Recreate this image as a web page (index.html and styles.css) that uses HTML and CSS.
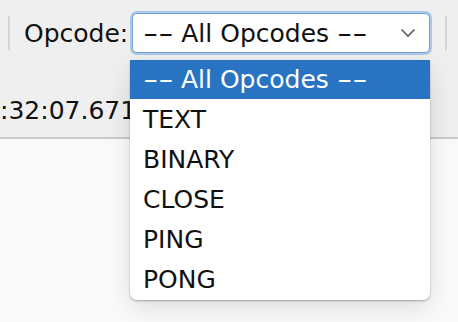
FILE: index.html
```html
<!DOCTYPE html>
<html lang="en">
<head>
  <meta charset="UTF-8">
  <title>Opcode filter</title>
  <link rel="stylesheet" href="styles.css">
</head>
<body>
  <div class="top">
    <div class="toolbar">
      <span class="sep"></span>
      <label class="label" for="opcode">Opcode:</label>
      <div class="select" id="opcode">
        <span class="value"><span class="dash">--</span> All Opcodes <span class="dash">--</span></span>
        <svg class="chevron" width="16" height="10" viewBox="0 0 16 10">
          <path d="M1.5 1.5 L8 8 L14.5 1.5" fill="none" stroke="#5a5a5a" stroke-width="1.6"/>
        </svg>
      </div>
      <span class="sep"></span>
    </div>
    <div class="row">
      <span class="time">:32:07.671</span>
    </div>
  </div>
  <div class="content"></div>

  <ul class="menu">
    <li class="active"><span class="dash">--</span> All Opcodes <span class="dash">--</span></li>
    <li>TEXT</li>
    <li>BINARY</li>
    <li>CLOSE</li>
    <li>PING</li>
    <li>PONG</li>
  </ul>
</body>
</html>
```

FILE: styles.css
```css
body {
  margin: 0;
  background: #fafafa;
  font-family: 'DejaVu Sans', 'Open Sans', Arial, sans-serif;
  font-size: 25px;
  color: #111;
  height: 322px;
  overflow: hidden;
  position: relative;
}

.top {
  background: #efefef;
  height: 137px;
  border-bottom: 2px solid #c8c8c8;
  overflow: hidden;
}

.toolbar {
  display: flex;
  align-items: center;
  height: 66px;
  padding-left: 8px;
}

.sep {
  width: 2px;
  height: 34px;
  background: #d4d4d4;
}

.label {
  margin-left: 14px;
  margin-right: 4px;
  white-space: nowrap;
}

.select {
  display: flex;
  align-items: center;
  justify-content: space-between;
  width: 298px;
  height: 40px;
  padding: 0 13px 0 10px;
  box-sizing: border-box;
  background: #fff;
  border: 1px solid #76a0d4;
  border-radius: 5px;
  box-shadow: 0 0 0 2px #aac8ea;
  white-space: nowrap;
}

.dash {
  display: inline-block;
  transform: scaleX(1.7);
  transform-origin: left center;
  margin-right: 12px;
}

.chevron {
  display: block;
}

.select + .sep {
  margin-left: 15px;
}

.row {
  display: flex;
  align-items: center;
  height: 58px;
  padding-top: 15px;
}

.menu {
  position: absolute;
  left: 130px;
  top: 60px;
  width: 300px;
  margin: 0;
  padding: 0;
  list-style: none;
  background: #fff;
  border-radius: 0 0 7px 7px;
  box-shadow: 0 1px 2px rgba(0, 0, 0, 0.3), 0 8px 24px rgba(0, 0, 0, 0.12);
  overflow: hidden;
}

.menu li {
  height: 40px;
  line-height: 40px;
  padding-left: 13px;
  white-space: nowrap;
}

.menu li.active {
  background: #2874c2;
  color: #fff;
  height: 39px;
  line-height: 39px;
  margin-bottom: 1px;
}
```
